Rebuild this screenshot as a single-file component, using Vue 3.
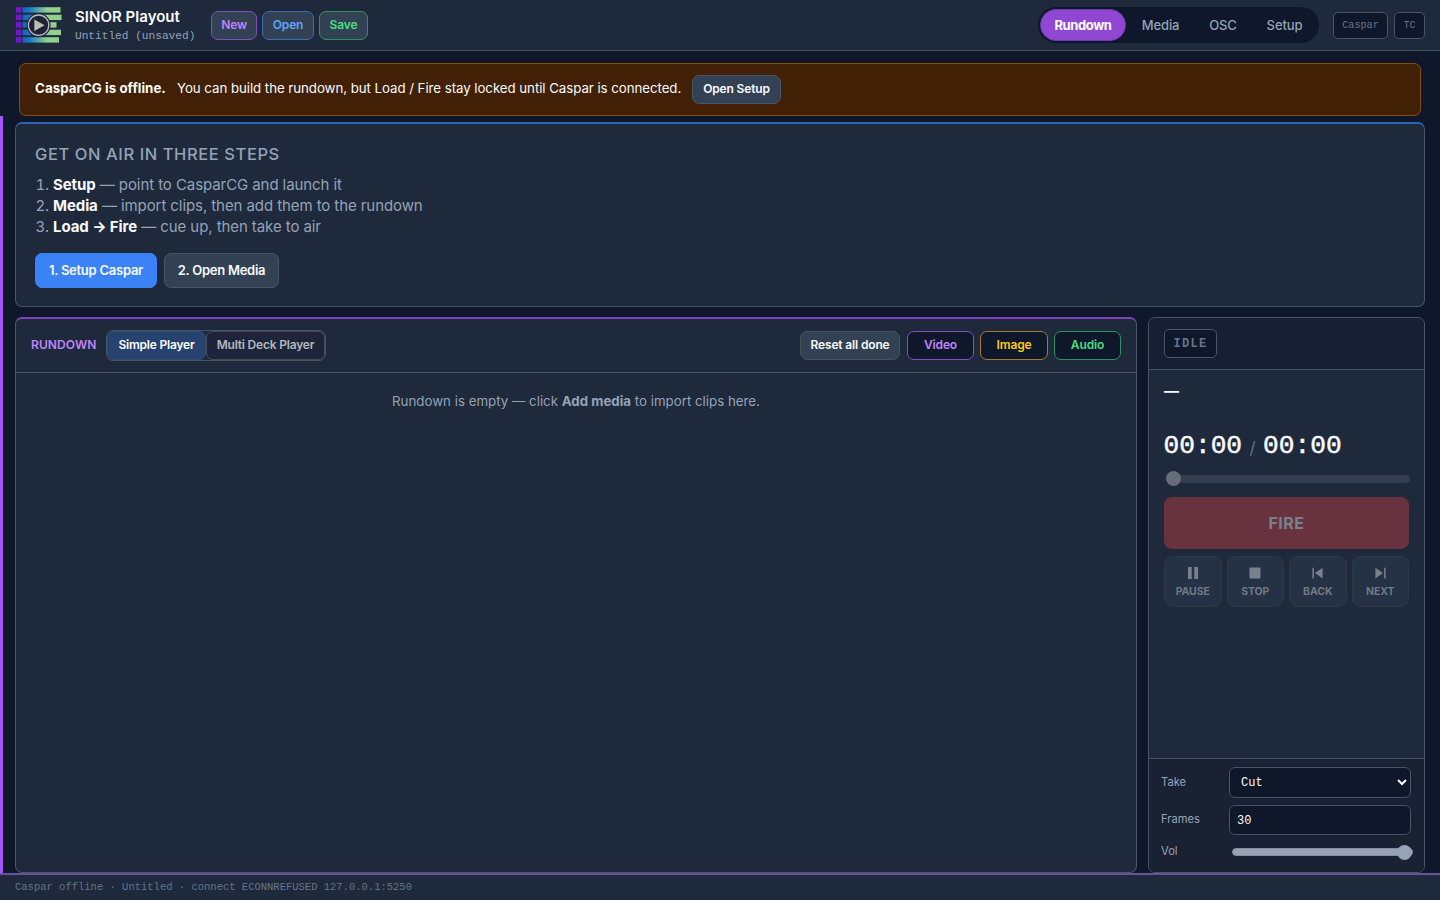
<template>
  <div class="app">
    <header class="topbar">
      <svg class="logo" width="48" height="38" viewBox="0 0 48 38">
        <defs>
          <linearGradient id="bar" gradientUnits="userSpaceOnUse" x1="8" y1="0" x2="32" y2="0">
            <stop offset="0" stop-color="#1565c0" />
            <stop offset="0.25" stop-color="#1976c5" />
            <stop offset="1" stop-color="#93d08f" />
          </linearGradient>
        </defs>
        <g v-for="(row, i) in logoRows" :key="i">
          <rect x="1" :y="1.2 + i * 7.5" width="5.4" height="5.4" fill="#7316ce" />
          <rect x="7.5" :y="1.2 + i * 7.5" :width="row - 7.5" height="5.4" fill="url(#bar)" />
        </g>
        <circle cx="23.6" cy="19.2" r="12" fill="#1e293b" />
        <circle cx="23.6" cy="19.2" r="10.2" fill="#1b2334" stroke="#b9b9bd" stroke-width="1.3" />
        <path d="M19.3 13.4 29.6 19.2 19.3 25z" fill="#bdbdbd" />
      </svg>
      <div class="brand">
        <div class="brand-name">SINOR Playout</div>
        <div class="brand-file">Untitled (unsaved)</div>
      </div>
      <div class="file-actions">
        <button class="btn file-new">New</button>
        <button class="btn file-open">Open</button>
        <button class="btn file-save">Save</button>
      </div>
      <nav class="tabs">
        <button
          v-for="tab in tabs"
          :key="tab"
          class="tab"
          :class="['tab-' + tab.toLowerCase(), { active: activeTab === tab }]"
          @click="activeTab = tab"
        >
          {{ tab }}
        </button>
      </nav>
      <div class="pills">
        <span class="pill pill-caspar">Caspar</span>
        <span class="pill pill-tc">TC</span>
      </div>
    </header>

    <div class="banner">
      <strong>CasparCG is offline.</strong>
      <span>You can build the rundown, but Load / Fire stay locked until Caspar is connected.</span>
      <button class="btn">Open Setup</button>
    </div>

    <main class="workspace">
      <section class="card steps">
        <h2>Get on air in three steps</h2>
        <ol>
          <li><b>Setup</b> — point to CasparCG and launch it</li>
          <li><b>Media</b> — import clips, then add them to the rundown</li>
          <li><b>Load → Fire</b> — cue up, then take to air</li>
        </ol>
        <div class="step-actions">
          <button class="btn primary">1. Setup Caspar</button>
          <button class="btn secondary">2. Open Media</button>
        </div>
      </section>

      <div class="columns">
        <section class="card rundown">
          <div class="rundown-head">
            <h3>Rundown</h3>
            <div class="mode">
              <button
                v-for="m in modes"
                :key="m.id"
                :class="[m.id, { active: mode === m.id }]"
                @click="mode = m.id"
              >
                {{ m.label }}
              </button>
            </div>
            <div class="add-actions">
              <button class="btn reset">Reset all done</button>
              <button class="btn add video">Video</button>
              <button class="btn add image">Image</button>
              <button class="btn add audio">Audio</button>
            </div>
          </div>
          <p class="empty">Rundown is empty — click <strong>Add media</strong> to import clips here.</p>
        </section>

        <aside class="card player">
          <div class="player-head"><span class="state">IDLE</span></div>
          <div class="player-body">
            <div class="now">—</div>
            <div class="clock">
              <span>00:00</span><span class="slash">/</span><span>00:00</span>
            </div>
            <input class="seek" type="range" min="0" max="100" value="0" disabled />
            <button class="fire" disabled>FIRE</button>
            <div class="transport">
              <button v-for="t in transport" :key="t.label" disabled>
                <svg width="14" height="14" viewBox="0 0 14 14"><path :d="t.icon" /></svg>
                <span>{{ t.label }}</span>
              </button>
            </div>
          </div>
          <div class="player-foot">
            <label>Take</label>
            <select v-model="take">
              <option>Cut</option>
              <option>Mix</option>
            </select>
            <label>Frames</label>
            <input v-model="frames" type="text" />
            <label>Vol</label>
            <input v-model="volume" class="vol" type="range" min="0" max="100" />
          </div>
        </aside>
      </div>
    </main>

    <footer class="statusbar">Caspar offline · Untitled · connect ECONNREFUSED 127.0.0.1:5250</footer>
  </div>
</template>

<script setup>
import { ref } from "vue";

const tabs = ["Rundown", "Media", "OSC", "Setup"];
const activeTab = ref("Rundown");

const modes = [
  { id: "simple", label: "Simple Player" },
  { id: "multi", label: "Multi Deck Player" },
];
const mode = ref("simple");

const take = ref("Cut");
const frames = ref("30");
const volume = ref(100);

// Right edge of each logo bar
const logoRows = [45.5, 46.5, 41.5, 46, 44];

const transport = [
  { label: "PAUSE", icon: "M2 1h3.7v12H2zM8.3 1H12v12H8.3z" },
  { label: "STOP", icon: "M2.5 1.5h9q1 0 1 1v9q0 1-1 1h-9q-1 0-1-1v-9q0-1 1-1z" },
  { label: "BACK", icon: "M1.4 1.8h1.5v10.6H1.4zM11.6 1.8v10.6L4 7.1z" },
  { label: "NEXT", icon: "M2.4 1.8v10.6L10 7.1zM11.1 1.8h1.5v10.6h-1.5z" },
];
</script>

<style>
body {
  margin: 0;
  background: #0f172a;
}
</style>

<style scoped>
.app {
  --panel: #1e293b;
  --line: #475569;
  --dim: #94a3b8;
  --mono: "Liberation Mono", monospace;
  display: flex;
  flex-direction: column;
  height: 100vh;
  overflow: hidden;
  background: #0f172a;
  color: #f8fafc;
  font-family: Inter, sans-serif;
  font-size: 14px;
}

.app * {
  box-sizing: border-box;
}

button {
  font-family: inherit;
  margin: 0;
  padding: 0;
  white-space: nowrap;
}

.topbar {
  flex: none;
  display: flex;
  align-items: center;
  height: 51px;
  padding: 0 15px;
  background: var(--panel);
  border-bottom: 1px solid var(--line);
}

.logo {
  flex: none;
}

.brand {
  width: 136px;
  margin-left: 12px;
  padding-top: 2px;
  white-space: nowrap;
}

.brand-name {
  font-size: 15px;
  font-weight: 600;
  line-height: 20px;
  letter-spacing: 0.03px;
}

.brand-file {
  font-family: var(--mono);
  font-size: 11.15px;
  line-height: 19px;
  color: var(--dim);
}

.file-actions {
  display: flex;
  gap: 5px;
}

.btn {
  height: 29px;
  padding-bottom: 2px;
  border: 1px solid var(--line);
  border-radius: 7px;
  background: #334155;
  color: #f8fafc;
  font-size: 12px;
  font-weight: 600;
  letter-spacing: -0.15px;
}

.file-new {
  width: 46px;
  color: #c084fc;
  border-color: #7e4fc0;
}

.file-open {
  width: 52px;
  color: #60a5fa;
  border-color: #3a6cb8;
}

.file-save {
  width: 49px;
  color: #4ade80;
  border-color: #2f9160;
}

.tabs {
  display: flex;
  width: 281px;
  height: 36px;
  margin-left: auto;
  padding: 2px 0 2px 2px;
  border-radius: 18px;
  background: #0f172a;
}

.tab {
  flex: none;
  height: 32px;
  padding-bottom: 1px;
  border: 0;
  border-radius: 16px;
  background: none;
  color: var(--dim);
  font-size: 13px;
  font-weight: 500;
  letter-spacing: -0.1px;
}

.tab.active {
  background: #9048d2;
  border: 1px solid #6f3aa8;
  color: #fff;
  font-weight: 700;
  letter-spacing: -0.4px;
}

.tab-rundown {
  width: 86px;
}

.tab-media {
  width: 69px;
}

.tab-osc {
  width: 56px;
}

.tab-setup {
  width: 67px;
}

.pills {
  display: flex;
  gap: 6px;
  margin-left: 14px;
}

.pill {
  height: 27px;
  border: 1px solid var(--line);
  border-radius: 5px;
  background: #0f172a;
  color: #64748b;
  font-family: var(--mono);
  font-size: 10.2px;
  line-height: 25px;
  text-align: center;
}

.pill-caspar {
  width: 55px;
}

.pill-tc {
  width: 31px;
}

.banner {
  flex: none;
  display: flex;
  align-items: center;
  gap: 11px;
  height: 53px;
  margin: 12px 19px 0;
  padding: 0 15px;
  border: 1px solid #854d0e;
  border-radius: 7px;
  background: #422006;
  font-size: 13.3px;
  white-space: nowrap;
}

.banner strong {
  width: 131px;
  padding-bottom: 3px;
  font-weight: 700;
  letter-spacing: 0.05px;
}

.banner span {
  width: 504px;
  padding-bottom: 3px;
  letter-spacing: -0.06px;
}

.banner .btn {
  width: 89px;
}

.workspace {
  flex: 1;
  min-height: 0;
  display: flex;
  flex-direction: column;
  gap: 10px;
  padding: 6px 15px 0 12px;
  border-left: 3px solid #a855f7;
}

.card {
  border: 1px solid var(--line);
  border-radius: 7px;
  background: var(--panel);
}

.steps {
  flex: none;
  height: 185px;
  padding: 19px;
  border-top: 2px solid #2f62b5;
}

.steps h2 {
  margin: 0 0 8px;
  color: var(--dim);
  font-size: 16.5px;
  font-weight: 500;
  line-height: 23px;
  letter-spacing: 0.58px;
  text-transform: uppercase;
}

.steps ol {
  margin: 0;
  padding-left: 18px;
  color: var(--dim);
  font-size: 15px;
  line-height: 21px;
  letter-spacing: -0.08px;
}

.steps b {
  color: #f8fafc;
  font-weight: 700;
  letter-spacing: -0.08px;
}

.step-actions {
  display: flex;
  gap: 7px;
  margin-top: 16px;
}

.step-actions .btn {
  height: 35px;
  font-size: 13px;
  letter-spacing: -0.25px;
}

.step-actions .primary {
  width: 122px;
  background: #3b82f6;
  border-color: #3b82f6;
}

.step-actions .secondary {
  width: 115px;
}

.columns {
  flex: 1;
  min-height: 0;
  display: flex;
  gap: 11px;
}

.rundown {
  flex: 1;
  border-top: 2px solid #7e42bd;
}

.rundown-head {
  display: flex;
  align-items: center;
  height: 54px;
  padding: 0 15px;
  border-bottom: 1px solid var(--line);
}

.rundown-head h3 {
  width: 75px;
  margin: 0;
  padding-bottom: 2px;
  color: #c084fc;
  font-size: 12px;
  font-weight: 600;
  letter-spacing: 0.1px;
  text-transform: uppercase;
}

.mode {
  display: flex;
  height: 31px;
  border: 1px solid var(--line);
  border-radius: 7px;
}

.mode button {
  height: 29px;
  padding-bottom: 2px;
  border: 1px solid #454b55;
  border-radius: 7px;
  background: #1e253a;
  color: #b4b8be;
  font-size: 12px;
  font-weight: 600;
  letter-spacing: -0.2px;
}

.mode .simple {
  width: 99px;
}

.mode .multi {
  width: 119px;
}

.mode .active {
  background: #26426f;
  border-color: #344a6b;
  color: #fff;
}

.add-actions {
  display: flex;
  gap: 6px;
  margin-left: auto;
}

.reset {
  width: 100px;
  margin-right: 1px;
  border-color: #4a515c;
}

.add {
  width: 67px;
  background: #0f172a;
}

.video {
  color: #c084fc;
  border-color: #7e4fc0;
}

.image {
  width: 68px;
  color: #facc15;
  border-color: #a67c2c;
}

.audio {
  color: #4ade80;
  border-color: #2f9160;
}

.empty {
  margin: 18px 0 0;
  color: var(--dim);
  font-size: 13.3px;
  line-height: 21px;
  letter-spacing: 0;
  text-align: center;
}

.player {
  flex: none;
  display: flex;
  flex-direction: column;
  width: 277px;
  overflow: hidden;
}

.player-head {
  height: 52px;
  padding: 11px 15px;
  background: #171f32;
  border-bottom: 1px solid var(--line);
}

.state {
  display: block;
  width: 53px;
  height: 29px;
  border: 1px solid var(--line);
  border-radius: 5px;
  background: #0f172a;
  color: #64748b;
  font-family: var(--mono);
  font-size: 12px;
  font-weight: 700;
  line-height: 28px;
  letter-spacing: 1.3px;
  text-align: center;
}

.player-body {
  flex: 1;
  padding: 11px 15px 0;
}

.now {
  height: 48px;
  font-size: 15px;
  font-weight: 700;
  line-height: 20px;
}

.clock {
  display: flex;
  align-items: center;
  height: 34px;
  margin-left: -0.5px;
  font-family: var(--mono);
  font-size: 26.2px;
  -webkit-text-stroke: 0.5px #f8fafc;
}

.slash {
  width: 21px;
  padding-top: 4px;
  color: #64748b;
  font-family: Inter, sans-serif;
  font-size: 17px;
  text-align: center;
  -webkit-text-stroke: 0;
}

input[type="range"] {
  appearance: none;
  display: block;
  height: 16px;
  margin: 0;
  background: none;
}

input[type="range"]::-webkit-slider-runnable-track {
  height: 8px;
  border-radius: 4px;
  background: #343e4e;
}

input[type="range"]::-webkit-slider-thumb {
  appearance: none;
  width: 15px;
  height: 15px;
  margin-top: -4px;
  border-radius: 50%;
  background: #666c78;
}

.player-body .seek {
  width: 244px;
  margin: 8px 0 0 2px;
}

.fire {
  display: block;
  width: 245px;
  height: 52px;
  margin-top: 10px;
  border: 0;
  border-radius: 8px;
  background: #68323f;
  color: #78818d;
  font-size: 16px;
  font-weight: 700;
  letter-spacing: 0.5px;
}

.transport {
  display: grid;
  grid-template-columns: repeat(4, 1fr);
  gap: 5px;
  width: 245px;
  margin-top: 7px;
}

.transport button {
  display: flex;
  flex-direction: column;
  align-items: center;
  height: 51px;
  padding-top: 9px;
  border: 1px solid #2e3744;
  border-radius: 8px;
  background: #253145;
  color: #717985;
  font-size: 10.5px;
  font-weight: 700;
  line-height: 14px;
  letter-spacing: -0.1px;
}

.transport svg {
  flex: none;
  margin-bottom: 5px;
  fill: #78818d;
}

.player-foot {
  display: grid;
  grid-template-columns: 68px 182px;
  grid-template-rows: 31px 30px 20px;
  row-gap: 7px;
  align-items: center;
  height: 114px;
  padding: 8px 12px 0;
  background: #192133;
  border-top: 1px solid var(--line);
}

.player-foot label {
  padding-bottom: 2px;
  color: var(--dim);
  font-size: 11.2px;
}

.player-foot select,
.player-foot input[type="text"] {
  width: 182px;
  height: 100%;
  padding: 1px 7px 0;
  border: 1px solid var(--line);
  border-radius: 6px;
  background: #0f172a;
  color: #f8fafc;
  font-family: var(--mono);
  font-size: 12px;
  outline: none;
}

.player-foot select {
  padding: 0 0 0 7px;
}

.player-foot .vol {
  width: 181px;
  margin-left: 3px;
}

.player-foot .vol::-webkit-slider-runnable-track {
  background: #94a3b8;
  border: 1px solid #8b8b8f;
}

.player-foot .vol::-webkit-slider-thumb {
  margin-top: -4.5px;
  background: #94a3b8;
}

.statusbar {
  flex: none;
  height: 27px;
  padding: 0 15px;
  background: var(--panel);
  border-top: 2px solid #6b509e;
  color: #64748b;
  font-family: var(--mono);
  font-size: 10.5px;
  line-height: 25px;
}
</style>
